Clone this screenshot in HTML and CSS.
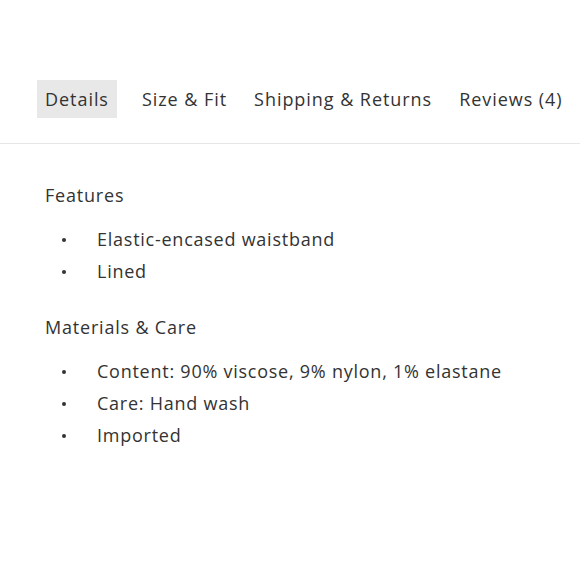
FILE: index.html
```html
<!DOCTYPE html>
<html>
<head>
<meta charset="utf-8">
<link rel="stylesheet" href="styles.css">
</head>
<body>
<div class="page">
  <nav class="tabs">
    <span class="tab active">Details</span>
    <span class="tab">Size &amp; Fit</span>
    <span class="tab">Shipping &amp; Returns</span>
    <span class="tab">Reviews (4)</span>
  </nav>
  <section class="details">
    <h3 class="heading">Features</h3>
    <ul class="list">
      <li class="item">Elastic-encased waistband</li>
      <li class="item">Lined</li>
    </ul>
    <h3 class="heading second">Materials &amp; Care</h3>
    <ul class="list">
      <li class="item">Content: 90% viscose, 9% nylon, 1% elastane</li>
      <li class="item">Care: Hand wash</li>
      <li class="item">Imported</li>
    </ul>
  </section>
</div>
</body>
</html>
```
FILE: styles.css
```css
html, body {
  margin: 0;
  padding: 0;
  background: #ffffff;
}
.page {
  font-family: "Open Sans", "Noto Sans", sans-serif;
  color: #333333;
}
.tabs {
  display: flex;
  gap: 11px;
  padding: 80px 0 25px 37px;
  border-bottom: 1px solid #e6e6e6;
}
.tab {
  display: block;
  height: 38px;
  line-height: 38px;
  padding: 0 8px;
  font-size: 18px;
  letter-spacing: 0.95px;
  white-space: nowrap;
}
.tab.active {
  background: #e8e8e8;
  margin-right: 6px;
}
.details {
  padding: 39px 0 0 45px;
}
.heading {
  margin: 0;
  font-size: 18px;
  font-weight: 400;
  line-height: 24px;
  letter-spacing: 0.8px;
}
.heading.second {
  margin-top: 28px;
}
.list {
  list-style: none;
  margin: 16px 0 0;
  padding: 0;
}
.item {
  display: flex;
  align-items: center;
  height: 32px;
  font-size: 18px;
  letter-spacing: 0.75px;
}
.item::before {
  content: "";
  width: 4px;
  height: 4px;
  border-radius: 50%;
  background: #333333;
  margin: 2px 31px 0 17px;
  flex: none;
}
```
